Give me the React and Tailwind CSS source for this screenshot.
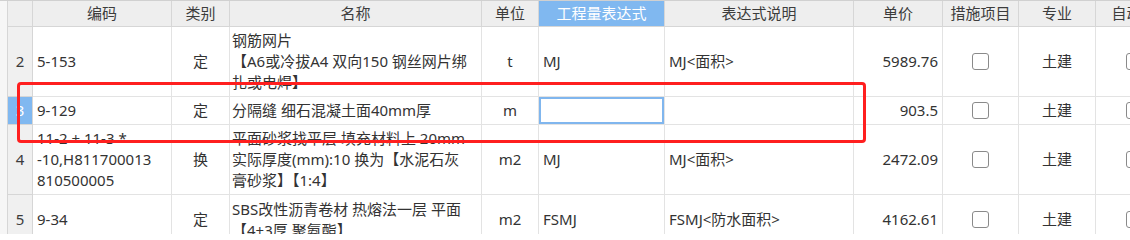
import React from "react";

const rows = [
  {
    n: "2",
    h: "h-[70px]",
    code: ["5-153"],
    type: "定",
    name: ["钢筋网片", "【A6或冷拔A4 双向150 钢丝网片绑", "扎或电焊】"],
    unit: "t",
    expr: "MJ",
    desc: "MJ<面积>",
    price: "5989.76",
  },
  {
    n: "3",
    h: "h-[28px]",
    code: ["9-129"],
    type: "定",
    name: ["分隔缝 细石混凝土面40mm厚"],
    unit: "m",
    expr: "",
    desc: "",
    price: "903.5",
    active: true,
  },
  {
    n: "4",
    h: "h-[70px]",
    code: ["11-2 + 11-3 *", "-10,H811700013", "810500005"],
    type: "换",
    name: ["平面砂浆找平层 填充材料上 20mm", "实际厚度(mm):10  换为【水泥石灰", "膏砂浆】【1:4】"],
    unit: "m2",
    expr: "MJ",
    desc: "MJ<面积>",
    price: "2472.09",
  },
  {
    n: "5",
    h: "h-[50px]",
    code: ["9-34"],
    type: "定",
    name: ["SBS改性沥青卷材 热熔法一层 平面", "【4+3厚 聚氨酯】"],
    unit: "m2",
    expr: "FSMJ",
    desc: "FSMJ<防水面积>",
    price: "4162.61",
  },
];

const hd = "flex items-center justify-center bg-[#eeeeee] border-r border-b border-[#d6d6d6] text-[#3c3c3c] whitespace-nowrap overflow-hidden";
const cell = "flex items-center border-r border-b border-[#e3e3e3] bg-white overflow-hidden whitespace-nowrap leading-[21px]";

function Box() {
  return <div className="w-[17px] h-[17px] shrink-0 rounded-[3px] border border-[#8a8a8a] bg-white" />;
}

export default function App() {
  return (
    <div className="relative w-[1130px] h-[234px] overflow-hidden bg-white border-t border-[#d0d0d0] font-['Noto_Sans','Noto_Sans_CJK_SC',sans-serif] text-[15px] text-[#333]">
      <div className="flex">
        <div className="w-[8px] h-[300px] shrink-0 bg-[#f6f6f6] border-r border-[#d6d6d6]" />
        <div className="flex flex-col shrink-0">
          <div className="grid grid-cols-[25px_139px_58px_252px_57px_126px_189px_89px_76px_77px_77px] h-[26px]">
            <div className={hd} />
            <div className={hd}>编码</div>
            <div className={hd}>类别</div>
            <div className={hd}>名称</div>
            <div className={hd}>单位</div>
            <div className="flex items-center justify-center bg-[#80b8f0] border-r border-b border-[#d6d6d6] text-white whitespace-nowrap">工程量表达式</div>
            <div className={hd}>表达式说明</div>
            <div className={hd}>单价</div>
            <div className={hd}>措施项目</div>
            <div className={hd}>专业</div>
            <div className={hd}>自动套</div>
          </div>
          {rows.map((r) => (
            <div key={r.n} className={`grid grid-cols-[25px_139px_58px_252px_57px_126px_189px_89px_76px_77px_77px] ${r.h}`}>
              <div
                className={
                  r.active
                    ? "flex items-center justify-center bg-[#80b8f0] border-r border-b border-[#d6d6d6] text-white"
                    : "flex items-center justify-center bg-[#f0f0f0] border-r border-b border-[#d6d6d6] text-[#3c3c3c]"
                }
              >
                {r.n}
              </div>
              <div className={`${cell} px-[4px]`}>
                <div>
                  {r.code.map((l, i) => (
                    <div key={i}>{l}</div>
                  ))}
                </div>
              </div>
              <div className={`${cell} justify-center`}>{r.type}</div>
              <div className={`${cell} px-[2px]`}>
                <div>
                  {r.name.map((l, i) => (
                    <div key={i}>{l}</div>
                  ))}
                </div>
              </div>
              <div className={`${cell} justify-center`}>{r.unit}</div>
              <div
                className={
                  r.active
                    ? `${cell} px-[4px] shadow-[inset_0_0_0_2px_#80b6ee]`
                    : `${cell} px-[4px]`
                }
              >
                {r.expr}
              </div>
              <div className={`${cell} px-[4px]`}>{r.desc}</div>
              <div className={`${cell} justify-end px-[4px]`}>{r.price}</div>
              <div className={`${cell} justify-center`}>
                <Box />
              </div>
              <div className={`${cell} justify-center`}>土建</div>
              <div className={`${cell} justify-center`}>
                <Box />
              </div>
            </div>
          ))}
        </div>
      </div>
      <div className="absolute left-[17px] top-[81px] w-[849px] h-[61px] border-[3px] border-[#ff1f1f] rounded-[4px] pointer-events-none" />
    </div>
  );
}
